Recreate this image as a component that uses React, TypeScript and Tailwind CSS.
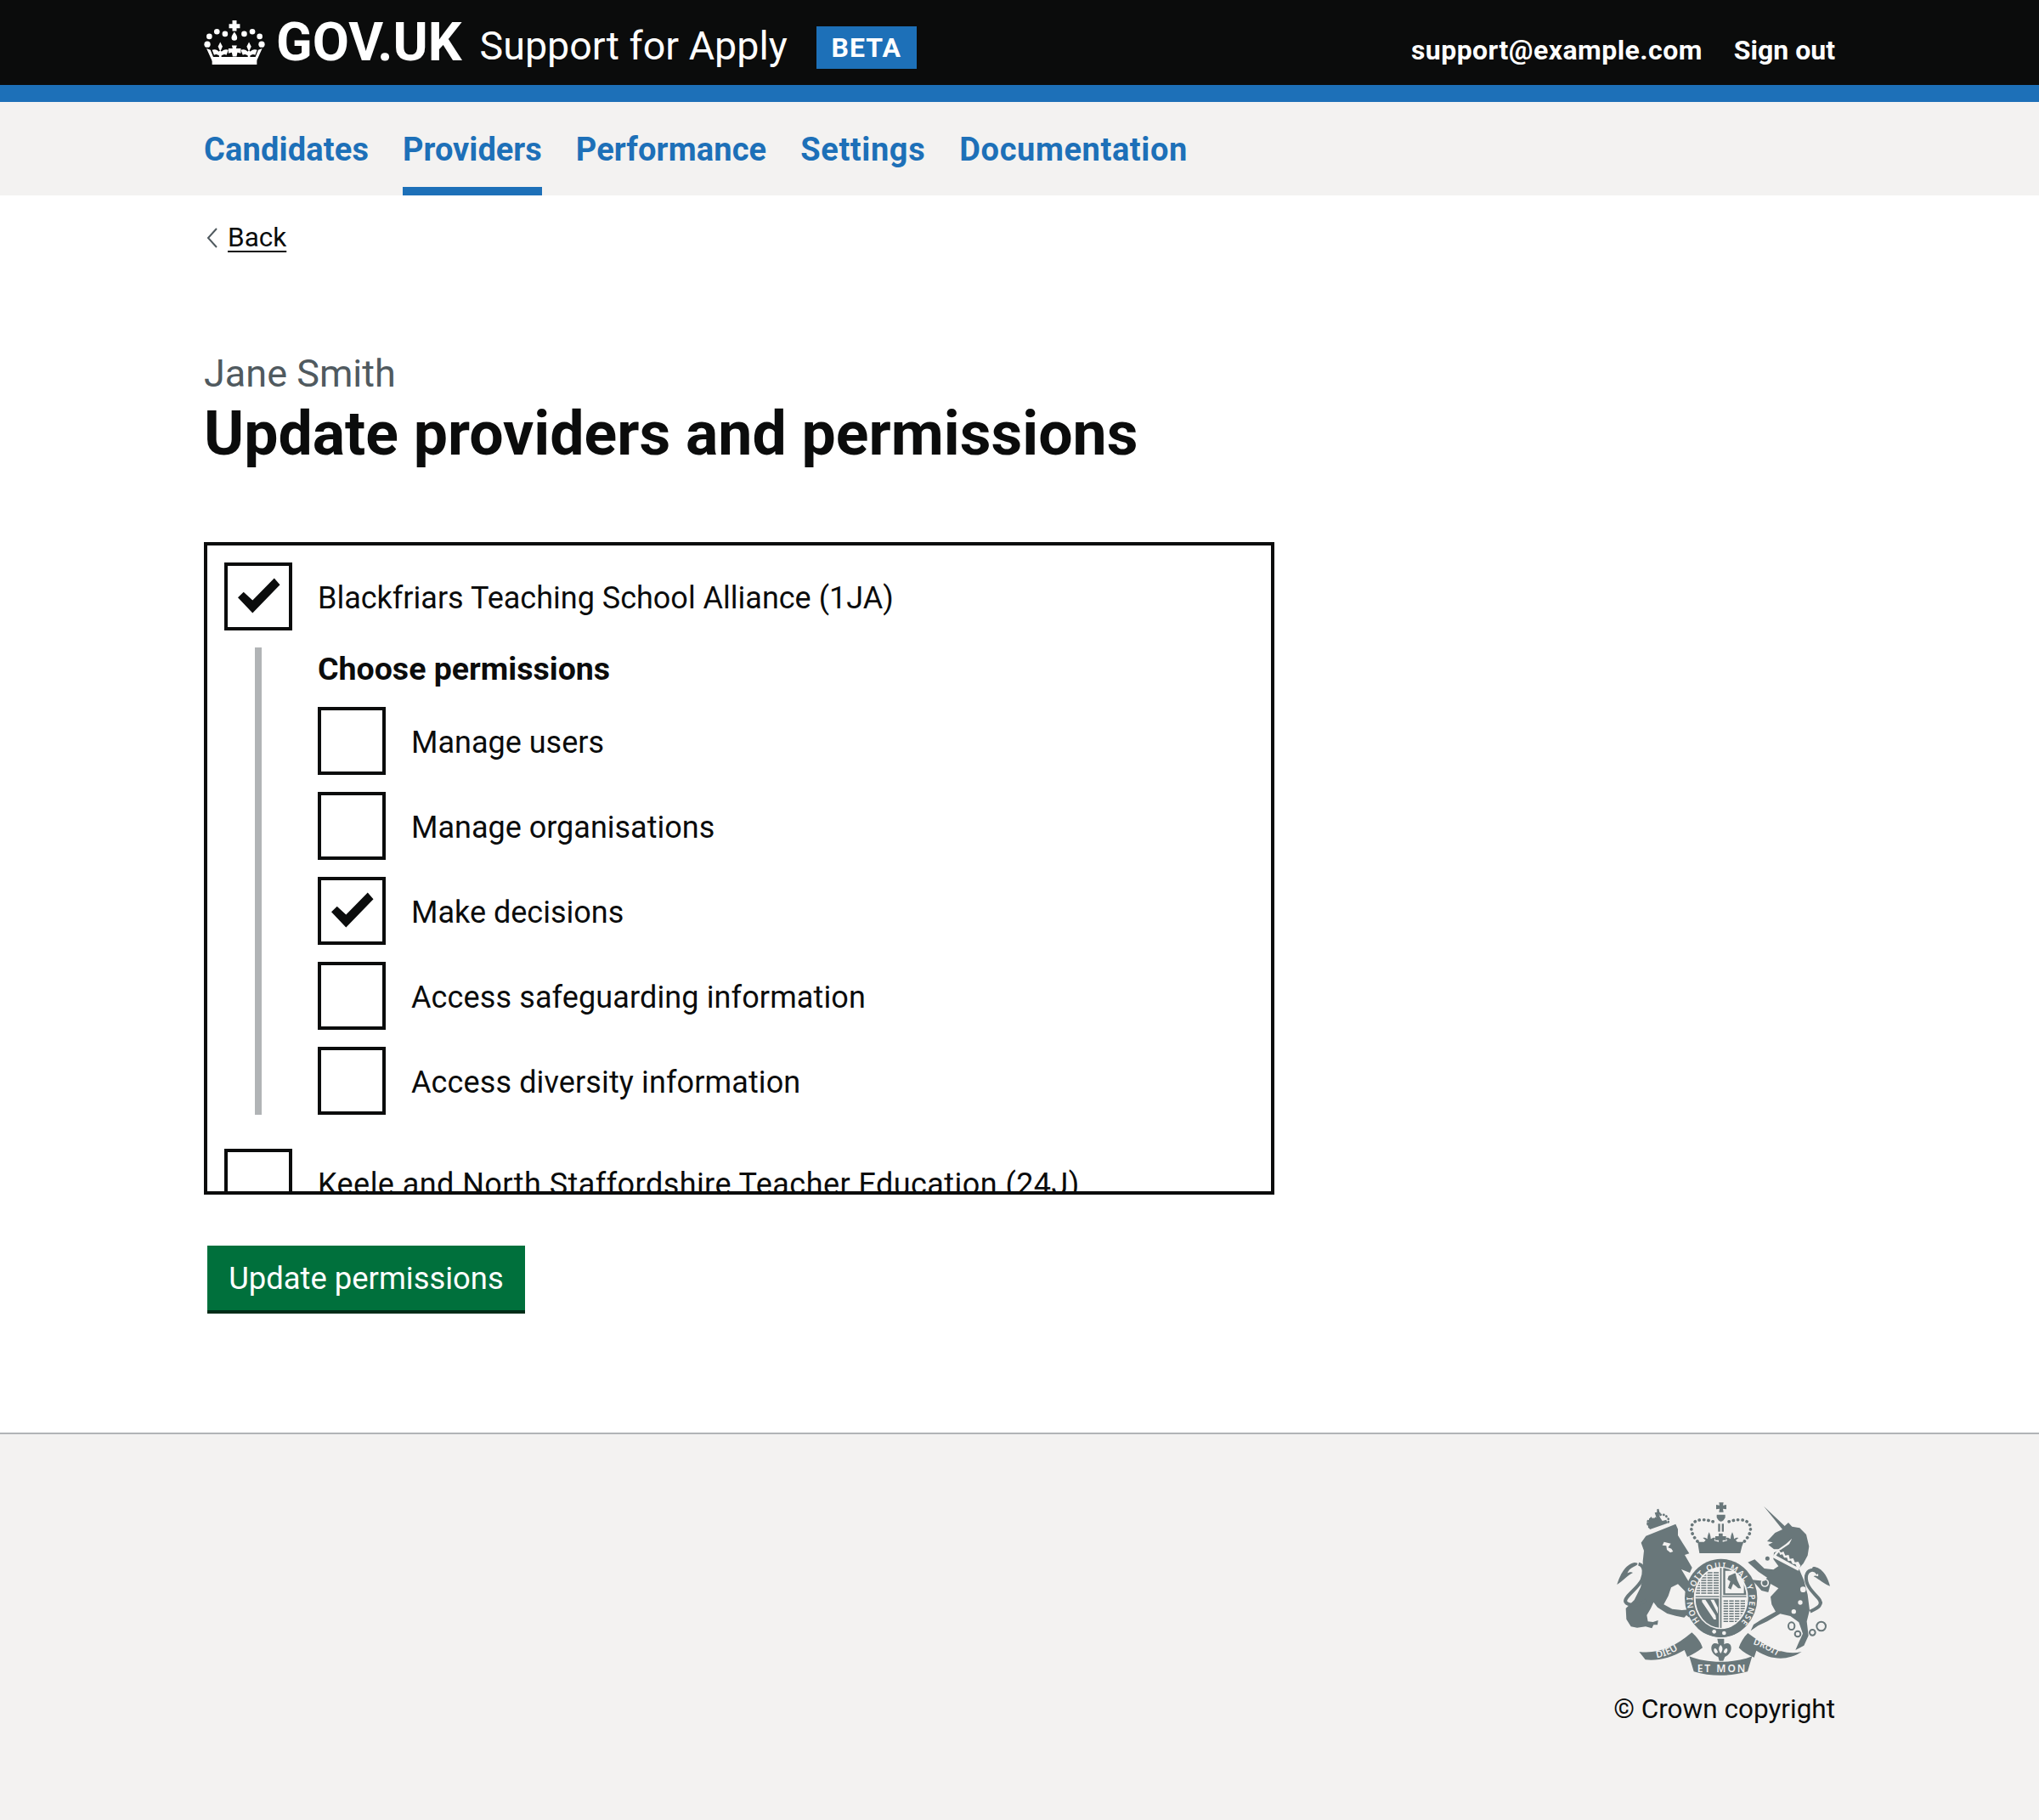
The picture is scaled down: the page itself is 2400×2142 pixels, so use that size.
import React from "react";

function Fleur({ x }: { x: number }) {
  return (
    <g transform={`translate(${x} 0)`}>
      <path d="M0 110l8 16-8 18-8-18z" />
      <path d="M-29 138c10-4 20 0 25 7v-3h8v3c5-7 15-11 25-7l-7 18c-6-4-12-3-18 2v8h-8v-8c-6-5-12-6-18-2z" />
    </g>
  );
}

function Crown() {
  const dots: [number, number, number][] = [[78,90,10],[105,73,10],[134,81,10],[202,81,10],[231,73,10],[257,90,10],[71,118,11],[264,118,11]];
  return (
    <svg viewBox="60 30 215 163" className="w-[72px] h-[54px] shrink-0 fill-white" aria-hidden="true">
      {dots.map(([x, y, r], i) => <circle key={i} cx={x} cy={y} r={r} />)}
      <path d="M160 33h15v13h12v15h-12v10h-15V61h-12V46h12z" />
      <path d="M167 74c7 10 10 15 10 21a10 10 0 0 1-20 0c0-6 3-11 10-21z" />
      <path d="M68 133l14 5 10 25h150l10-25 14-5-20 44H88z" />
      <Fleur x={117} />
      <Fleur x={219} />
      <path d="M158 122h18l-3 11h17v17l-12-3-3 14h-14l-3-14-12 3v-17h15z" />
      <rect x="88" y="175" width="159" height="15" />
    </svg>
  );
}

function Tick() {
  return (
    <svg viewBox="0 0 72 72" className="w-[72px] h-[72px] fill-[#0b0c0c]" aria-hidden="true">
      <polygon points="12,37.3 18.7,30.7 29.3,40.5 54.8,14.5 61.5,22.3 29.3,55.5" />
    </svg>
  );
}

function Box({ on = false }: { on?: boolean }) {
  return (
    <span className="w-20 h-20 shrink-0 border-4 border-[#0b0c0c] bg-white block">
      {on && <Tick />}
    </span>
  );
}

function Row({ label, on, wide }: { label: string; on?: boolean; wide?: boolean }) {
  return (
    <div className="flex items-center h-20 mb-5 last:mb-0">
      <Box on={on} />
      <span className={wide ? "ml-[30px] pt-[3px] text-[36px] leading-[50px] tracking-[0.12px] text-[#0b0c0c]" : "ml-[30px] pt-[3px] text-[36px] leading-[50px] text-[#0b0c0c]"}>{label}</span>
    </div>
  );
}

function Crest() {
  const c = "#69777a";
  const bg = "#f3f2f1";
  const letter = "[font-family:'Noto_Sans',sans-serif] font-semibold";
  return (
    <svg viewBox="120 60 780 660" className="w-[260px] h-[220px]" aria-hidden="true">
      <defs>
        <clipPath id="shieldClip"><ellipse cx="497" cy="422" rx="90" ry="106" /></clipPath>
      </defs>
      {/* Lion */}
      <path fill={c} d="M232 203l45-18 60-24 8 18 0 22 16 26 24 38-16 5 26 45-8 18-30-12 30 50 14 50-10 10-18-30-28-28-24 12-10 30-16 30 30 16 34 4 24-2 14 18-10 0-2 10-10-8-8 8-30-6-30-8-34-22-14-18 -10 22-14 24 4 22 18 2 18-6-2 16-14 0-6 12-22-6-30 4-22-4-16-26-2-38 30-30 22-44 10-40-2-52 4-38-10-28z" />
      <path fill="none" stroke={c} strokeWidth="12" d="M234 430c-25 18-65 22-74 6-8-16 44-48 58-78 8-20 12-50-12-56" />
      <path fill={c} d="M130 375c10-32 28-72 62-78 16 0 12 10-2 14-14 6-20 14-24 24 6-4 14-6 20-2-18 8-36 30-56 42z" />
      <path fill={bg} d="M296 224l24 6-10 14 12 4 6 10-10 4-12-10-2-14-14-2z" />
      {/* Lion crown */}
      <path fill="none" stroke={c} strokeWidth="8" strokeDasharray="1 10" strokeLinecap="round" d="M244 172c-18-26 10-34 20-26 4-16 30-26 42-10 12 12 4 20 0 24" />
      <path fill={c} d="M246 180l62-22-4-12-14 4-8-12-4-10 8-4-6-5-3-12-6 2 0 10-8 2 6 18-12 6-6-10-8 8-1 12-8 0z" />
      {/* Royal crown */}
      <path fill={c} d="M490 85h16l-2 10 12-2v16l-12-2 2 12h-16l2-12-12 2V93l12 2z" />
      <rect x="487" y="160" width="7" height="28" fill={c} /><rect x="500" y="160" width="7" height="28" fill={c} />
      <path fill={c} d="M482 128c10 0 20 0 30 0v10c-4 8-8 14-15 14s-11-6-15-14z" />
      <path fill="none" stroke={c} strokeWidth="11" strokeDasharray="0.5 15.5" strokeLinecap="round" d="M414 222c-32-34-30-76 18-76 22 0 34 8 50 8M580 222c32-34 30-76-18-76-22 0-34 8-50 8" />
      <path fill={c} d="M415 224l8 0 14 0 6-6-10-8c6-2 12 0 16 4 0-8 2-16 6-24 4 8 6 16 6 24 6-4 10-6 16-4l-4 10 16 4 0-6-12 0 0-14 12 0 0-10 14 0 0 10 12 0 0 14-12 0 0 6 16-4-4-10c6-2 10 0 16 4 0-8 2-16 6-24 4 8 6 16 6 24 4-4 10-6 16-4l-10 8 6 6 22 0-6 16-6 24-144 0-4-24z" />
      {/* Unicorn */}
      <path fill={c} d="M648 98L722 168L735 156L748 170L775 175L798 198L808 240L803 272L788 300L772 318L790 360L803 410L810 465L800 505L806 555L790 590L760 606L772 578L786 548L772 508L742 486L706 478L660 505L628 520L602 538L612 516L640 498L690 470L676 445L672 418L700 388L672 372L664 402L640 396L606 358L650 362L660 350L630 330L592 296L616 286L650 318L682 322L700 310L682 285L684 262L708 252L738 232L748 212L726 232L700 250L684 250L664 234L680 226L660 222L688 192L714 180Z" />
      <g fill="none" stroke={bg} strokeWidth="5"><circle cx="652" cy="369" r="12" /><circle cx="661" cy="283" r="10" fill={c} /></g>
      <path fill={bg} d="M688 264l12-14 8 12 10-4 6 14 12-2 4 14 12-2 6 14 12-2 8 14-8 18-92-48z" />
      <path fill={c} d="M696 266l6-6 4 10 8-2 6 12 10 0 4 12 10-2 6 12 10 0 4 10-72-40z" />
      <g fill={bg}><circle cx="777" cy="438" r="8" /><circle cx="754" cy="470" r="8" /><circle cx="787" cy="392" r="10" /></g>
      <g fill="none" stroke={c} strokeWidth="6">
        <ellipse cx="746" cy="521" rx="11" ry="13" /><ellipse cx="768" cy="549" rx="10" ry="10" /><ellipse cx="820" cy="544" rx="10" ry="10" /><ellipse cx="851" cy="522" rx="16" ry="16" />
      </g>
      <path fill="none" stroke={c} strokeWidth="12" d="M812 470c20-10 52-22 28-48-20-22-46-45-42-78 4-20 26-30 42-8" />
      <path fill={c} d="M882 380c-6-24-22-62-54-68-14 0-10 8 4 14 8 6 10 12 8 20-6-2-12-4-16 0 20 10 38 28 58 34z" />
      {/* Garter */}
      <ellipse cx="497" cy="422" rx="128" ry="138" fill={c} />
      <ellipse cx="497" cy="422" rx="96" ry="110" fill={bg} />
      <path id="garter" fill="none" d="M426 508A100 112 0 1 1 568 508" />
      <text fill={bg} fontSize="29" className={letter}><textPath href="#garter" startOffset="1%" textLength="500" lengthAdjust="spacing">HONI SOIT QUI MAL Y PENSE</textPath></text>
      {/* Shield */}
      <g clipPath="url(#shieldClip)">
        <rect x="400" y="310" width="200" height="230" fill={bg} />
        <g stroke={c} strokeWidth="4.5" fill="none">
          <path d="M405 333h86M405 342h86M405 351h86M405 360h86M405 369h86M405 378h86M405 387h86M405 396h86M405 405h86" strokeDasharray="18 4" />
          <path d="M506 433h86M506 442h86M506 451h86M506 460h86M506 469h86M506 478h86M506 487h86M506 496h86M506 505h86" strokeDasharray="16 4" />
        </g>
        <path fill={c} d="M505 312h90v100h-90zM512 326v80h66v-80z" fillRule="evenodd" />
        <path fill={c} d="M524 344l24-10 6 24 14 30h-10l-18-16-8 20-10-6 8-22-10-8z" />
        <path fill={c} d="M405 424h85v110h-85z" />
        <path fill={bg} d="M430 428l12 0 36 56 2 14-8 0-42-62zM460 428h12l14 28v22z" />
        <rect x="400" y="413" width="200" height="9" fill={bg} />
        <rect x="400" y="415" width="200" height="4" fill={c} />
        <rect x="491" y="310" width="11" height="230" fill={bg} />
        <rect x="494" y="310" width="5" height="230" fill={c} />
      </g>
      {/* Strap */}
      <path fill={c} d="M424 505c14 16 38 28 74 30 34-2 56-12 70-30l14 18c-20 24-50 38-84 38-38 0-72-16-88-38z" />
      <circle cx="473" cy="541" r="7" fill={bg} /><circle cx="508" cy="546" r="7" fill={bg} />
      {/* Fleur */}
      <path fill={c} d="M484 566h24v20c10-8 26-4 25 14 0 14-12 26-22 30l-6 14h-14l-4-14c-12-4-24-16-24-30 0-18 14-22 25-14z" />
      <path fill={bg} d="M496 588c8 8 9 18 0 30-9-12-8-22 0-30zM474 600c6 0 10 6 12 14l-8 4c-6-6-8-12-4-18zM518 600c-6 0-10 6-12 14l8 4c6-6 8-12 4-18z" />
      {/* Motto */}
      <path fill={c} d="M208 612c66 8 126-16 186-68 18 16 32 34 38 54-18 14-34 24-54 32l-10-24c-44 26-96 40-138 34z" />
      <path fill={c} d="M782 612C716 628 650 590 592 546C576 562 566 580 560 598C576 614 594 624 614 632L622 608C672 640 730 646 782 612Z" />
      <path fill={c} d="M385 628c60 26 160 26 222 0l-16 54c-64 18-130 18-190 0z" />
      <path id="dieu" fill="none" d="M270 634c36-6 70-22 100-48" />
      <text fill={bg} fontSize="34" className={letter}><textPath href="#dieu">DIEU</textPath></text>
      <path id="droit" fill="none" d="M610 585C650 597 690 622 722 644" />
      <text fill={bg} fontSize="31" className={letter}><textPath href="#droit">DROIT</textPath></text>
      <text x="413" y="685" fill={bg} fontSize="36" className={letter} textLength="170">ET MON</text>
    </svg>
  );
}

export default function App() {
  return (
    <div className="min-h-[2142px] flex flex-col bg-white text-[#0b0c0c] [font-family:Roboto,'Noto_Sans',Arial,sans-serif]">
      <header className="h-[120px] bg-[#0b0c0c] border-b-[20px] border-[#1d70b8] px-[240px] flex items-start justify-between text-white">
        <div className="flex items-center pt-[20px]">
          <Crown />
          <span className="ml-[13px] text-[62.6px] leading-[50px] font-bold">GOV.UK</span>
          <span className="ml-[21px] text-[46.6px] leading-[60px] relative top-[4px]">Support for Apply</span>
          <span className="ml-[34px] w-[118px] h-[50px] relative top-[6px] bg-[#1d70b8] flex items-center justify-center text-[32px] font-bold tracking-[1px]">BETA</span>
        </div>
        <div className="flex gap-[37px] pt-[37px] text-[32px] leading-[44px] font-bold">
          <span className="tracking-[0.45px]">support@example.com</span>
          <span>Sign out</span>
        </div>
      </header>

      <nav className="h-[110px] bg-[#f3f2f1] px-[240px] flex gap-[40px] text-[#1d70b8] text-[38px] font-bold">
        <span className="h-full pt-[31px] leading-[50px] tracking-[0.15px]">Candidates</span>
        <span className="h-full pt-[31px] leading-[50px] border-b-[10px] border-[#1d70b8]">Providers</span>
        <span className="h-full pt-[31px] leading-[50px] tracking-[0.15px]">Performance</span>
        <span className="h-full pt-[31px] leading-[50px] tracking-[0.6px]">Settings</span>
        <span className="h-full pt-[31px] leading-[50px] tracking-[0.6px]">Documentation</span>
      </nav>

      <main className="px-[240px] flex-1">
        <div className="flex items-center h-[40px] mt-[30px] text-[31.5px]">
          <svg viewBox="0 0 13 24" className="w-[13px] h-[24px] ml-[3px] fill-none stroke-[#505a5f] stroke-2" aria-hidden="true">
            <path d="M12 1L2 12l10 11" />
          </svg>
          <span className="ml-[12px] underline underline-offset-[5px] decoration-2">Back</span>
        </div>

        <p className="mt-[110px] text-[45px] leading-[60px] text-[#505a5f]">Jane Smith</p>
        <h1 className="mt-[1px] text-[71.6px] leading-[80px] font-bold">Update providers and permissions</h1>

        <div className="mt-[87px] w-[1260px] h-[768px] border-4 border-[#0b0c0c] overflow-hidden pt-[20px] pl-[20px]">
          <div className="flex items-center h-20">
            <Box on />
            <span className="ml-[30px] pt-[3px] text-[36px] leading-[50px]">Blackfriars Teaching School Alliance (1JA)</span>
          </div>
          <div className="ml-[36px] mt-[20px] border-l-8 border-[#b1b4b6] pl-[66px] h-[550px]">
            <p className="text-[37.5px] leading-[50px] font-bold h-[70px]">Choose permissions</p>
            <Row label="Manage users" />
            <Row label="Manage organisations" />
            <Row label="Make decisions" on />
            <Row label="Access safeguarding information" wide />
            <Row label="Access diversity information" wide />
          </div>
          <div className="flex items-center h-20 mt-[40px]">
            <Box />
            <span className="ml-[30px] pt-[3px] text-[36px] leading-[50px] tracking-[0.44px]">Keele and North Staffordshire Teacher Education (24J)</span>
          </div>
        </div>

        <button className="block mt-[60px] ml-[4px] w-[374px] h-[80px] pt-[2px] bg-[#00703c] border-b-4 border-[#002d18] text-white text-[36.4px] leading-[50px]">Update permissions</button>
      </main>

      <footer className="h-[456px] mt-[140px] bg-[#f3f2f1] border-t-2 border-[#b1b4b6] px-[240px] pt-[72px] flex flex-col items-end">
        <Crest />
        <p className="mt-[10px] text-[31.5px] leading-[44px]">© Crown copyright</p>
      </footer>
    </div>
  );
}
